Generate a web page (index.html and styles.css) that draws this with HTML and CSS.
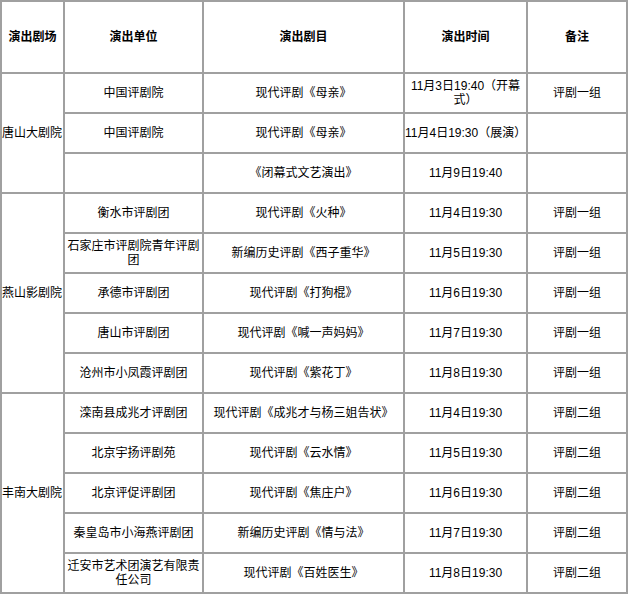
FILE: index.html
```html
<!DOCTYPE html>
<html lang="zh-CN">
<head>
<meta charset="utf-8">
<title>演出安排</title>
<link rel="stylesheet" href="styles.css">
</head>
<body>
<table class="schedule">
  <thead>
    <tr>
      <th class="c-venue">演出剧场</th>
      <th class="c-troupe">演出单位</th>
      <th class="c-play">演出剧目</th>
      <th class="c-time">演出时间</th>
      <th class="c-note">备注</th>
    </tr>
  </thead>
  <tbody>
    <tr>
      <td rowspan="3" class="venue">唐山大剧院</td>
      <td>中国评剧院</td>
      <td>现代评剧《母亲》</td>
      <td class="time">11月3日19:40（开幕式）</td>
      <td>评剧一组</td>
    </tr>
    <tr>
      <td>中国评剧院</td>
      <td>现代评剧《母亲》</td>
      <td class="time nowrap">11月4日19:30（展演）</td>
      <td></td>
    </tr>
    <tr>
      <td></td>
      <td>《闭幕式文艺演出》</td>
      <td class="time">11月9日19:40</td>
      <td></td>
    </tr>
    <tr>
      <td rowspan="5" class="venue">燕山影剧院</td>
      <td>衡水市评剧团</td>
      <td>现代评剧《火种》</td>
      <td class="time">11月4日19:30</td>
      <td>评剧一组</td>
    </tr>
    <tr>
      <td>石家庄市评剧院青年评剧团</td>
      <td>新编历史评剧《西子重华》</td>
      <td class="time">11月5日19:30</td>
      <td>评剧一组</td>
    </tr>
    <tr>
      <td>承德市评剧团</td>
      <td>现代评剧《打狗棍》</td>
      <td class="time">11月6日19:30</td>
      <td>评剧一组</td>
    </tr>
    <tr>
      <td>唐山市评剧团</td>
      <td>现代评剧《喊一声妈妈》</td>
      <td class="time">11月7日19:30</td>
      <td>评剧一组</td>
    </tr>
    <tr>
      <td>沧州市小凤霞评剧团</td>
      <td>现代评剧《紫花丁》</td>
      <td class="time">11月8日19:30</td>
      <td>评剧一组</td>
    </tr>
    <tr>
      <td rowspan="5" class="venue">丰南大剧院</td>
      <td>滦南县成兆才评剧团</td>
      <td>现代评剧《成兆才与杨三姐告状》</td>
      <td class="time">11月4日19:30</td>
      <td>评剧二组</td>
    </tr>
    <tr>
      <td>北京宇扬评剧苑</td>
      <td>现代评剧《云水情》</td>
      <td class="time">11月5日19:30</td>
      <td>评剧二组</td>
    </tr>
    <tr>
      <td>北京评促评剧团</td>
      <td>现代评剧《焦庄户》</td>
      <td class="time">11月6日19:30</td>
      <td>评剧二组</td>
    </tr>
    <tr>
      <td>秦皇岛市小海燕评剧团</td>
      <td>新编历史评剧《情与法》</td>
      <td class="time">11月7日19:30</td>
      <td>评剧二组</td>
    </tr>
    <tr>
      <td>迁安市艺术团演艺有限责任公司</td>
      <td>现代评剧《百姓医生》</td>
      <td class="time">11月8日19:30</td>
      <td>评剧二组</td>
    </tr>
  </tbody>
</table>
</body>
</html>
```

FILE: styles.css
```css
html, body {
  margin: 0;
  padding: 0;
  background: #ffffff;
}

body {
  font-family: "Liberation Sans", "Noto Sans CJK SC", sans-serif;
  font-size: 12px;
  line-height: 14px;
  color: #000000;
}

.schedule {
  table-layout: fixed;
  width: 628px;
  border-collapse: separate;
  border-spacing: 0;
  border: 1px solid #a0a0a0;
}

.schedule th,
.schedule td {
  box-sizing: border-box;
  border: 1px solid #a0a0a0;
  padding: 0;
  text-align: center;
  vertical-align: middle;
}

.schedule th {
  height: 72px;
  font-weight: bold;
}

.schedule td {
  height: 40px;
}

.c-venue { width: 63px; }
.c-troupe { width: 139px; }
.c-play { width: 201px; }
.c-time { width: 123px; }
.c-note { width: 100px; }

.schedule td.venue {
  text-align: left;
  white-space: nowrap;
}

.schedule td.nowrap {
  white-space: nowrap;
}
```
